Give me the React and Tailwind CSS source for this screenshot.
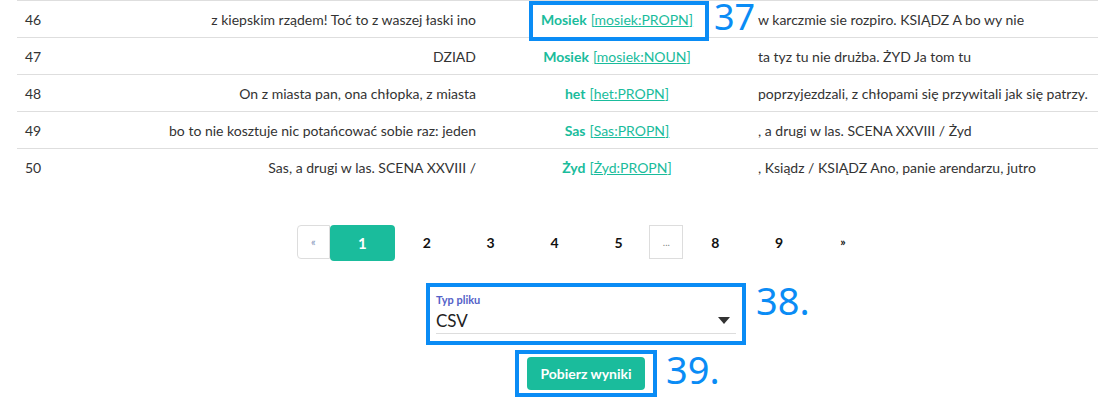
import React from "react";

const rows = [
  { n: 46, left: "z kiepskim rządem! Toć to z waszej łaski ino", w: "Mosiek", tag: "mosiek:PROPN", right: "w karczmie sie rozpiro. KSIĄDZ A bo wy nie", mark: true },
  { n: 47, left: "DZIAD", w: "Mosiek", tag: "mosiek:NOUN", right: "ta tyz tu nie drużba. ŻYD Ja tom tu" },
  { n: 48, left: "On z miasta pan, ona chłopka, z miasta", w: "het", tag: "het:PROPN", right: "poprzyjezdzali, z chłopami się przywitali jak się patrzy." },
  { n: 49, left: "bo to nie kosztuje nic potańcować sobie raz: jeden", w: "Sas", tag: "Sas:PROPN", right: ", a drugi w las. SCENA XXVIII / Żyd" },
  { n: 50, left: "Sas, a drugi w las. SCENA XXVIII /", w: "Żyd", tag: "Żyd:PROPN", right: ", Ksiądz / KSIĄDZ Ano, panie arendarzu, jutro" },
];

const pages = ["2", "3", "4", "5"];

export default function App() {
  return (
    <div className="w-[1115px] h-[408px] bg-white font-['Lato',sans-serif] text-[14px] text-[#333] overflow-hidden">
      <div className="ml-[17px] w-[1081px]">
        {rows.map((r) => (
          <div key={r.n} className="flex h-[37px] items-stretch border-t border-[#dedede]">
            <div className="w-[100px] pl-2 flex items-center">{r.n}</div>
            <div className="w-[367px] pr-2 flex items-center justify-end whitespace-nowrap">{r.left}</div>
            <div className="relative w-[266px] flex items-center justify-center whitespace-nowrap text-[#1abc9c]">
              <span className="font-bold">{r.w}</span>
              <span className="underline ml-[4px]">[{r.tag}]</span>
              {r.mark && (
                <>
                  <div className="absolute left-[45px] top-[0px] w-[180px] h-[40px] border-4 border-[#0a8cf5]" />
                  <div className="absolute left-[230px] top-[-2px] text-[36px] leading-none text-[#0a8cf5] font-['Noto_Sans',sans-serif]">37</div>
                </>
              )}
            </div>
            <div className="w-[348px] pl-2 flex items-center whitespace-nowrap">{r.right}</div>
          </div>
        ))}
      </div>

      <div className="ml-[297px] w-[578px] mt-[40px] flex flex-col items-center">
        <div className="flex items-start w-full">
          <div className="w-[33px] h-[34px] border border-[#dddddd] rounded-l-[4px] flex items-center justify-center text-[11px] text-[#7f93b8]">«</div>
          <div className="w-[65px] h-[36px] bg-[#1abc9c] rounded-[4px] flex items-center justify-center text-white font-bold text-[15px]">1</div>
          {pages.map((p) => (
            <div key={p} className="w-[64px] h-[34px] flex items-center justify-center font-bold text-[14px] text-[#111]">{p}</div>
          ))}
          <div className="w-[34px] h-[34px] border border-[#dddddd] flex items-center justify-center text-[10px] text-[#888] -ml-[1px]">...</div>
          {["8", "9"].map((p) => (
            <div key={p} className="w-[64px] h-[34px] flex items-center justify-center font-bold text-[14px] text-[#111]">{p}</div>
          ))}
          <div className="w-[64px] h-[34px] flex items-center justify-center font-bold text-[12px] text-[#111]">»</div>
        </div>

        <div className="relative mt-[22px] w-[320px] h-[62px] border-4 border-[#0a8cf5] px-[6px] pt-[6px]">
          <div className="text-[11px] font-bold text-[#5461c8] leading-[14px]">Typ pliku</div>
          <div className="flex items-center justify-between h-[27px] border-b border-[#dddddd] pr-[6px]">
            <span className="text-[17px] text-[#222] leading-none">CSV</span>
            <svg width="12" height="7" viewBox="0 0 12 7"><path d="M0 0 L12 0 L6 7 Z" fill="#333" /></svg>
          </div>
          <div className="absolute left-[326px] top-[-6px] text-[38px] leading-none text-[#0a8cf5] font-['Noto_Sans',sans-serif]">38.</div>
        </div>

        <div className="relative mt-[5px] w-[142px] h-[47px] border-4 border-[#0a8cf5] flex items-center justify-center">
          <button className="w-[118px] h-[33px] rounded-[4px] bg-[#1abc9c] text-white font-bold text-[14px]">Pobierz wyniki</button>
          <div className="absolute left-[147px] top-[-4px] text-[38px] leading-none text-[#0a8cf5] font-['Noto_Sans',sans-serif]">39.</div>
        </div>
      </div>
    </div>
  );
}
